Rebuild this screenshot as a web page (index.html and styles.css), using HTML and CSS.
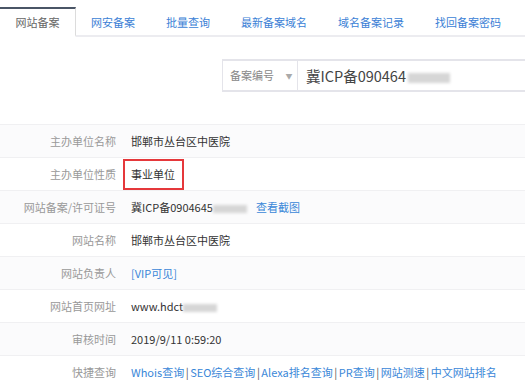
FILE: index.html
```html
<!DOCTYPE html>
<html lang="zh-CN">
<head>
    <meta charset="UTF-8">
    <meta name="viewport" content="width=device-width, initial-scale=1.0">
    <title>网站备案查询</title>
    <link rel="stylesheet" href="styles.css">
</head>
<body>

    <!-- tabs -->
    <ul class="tabs">
        <li class="tab active">网站备案</li>
        <li class="tab">网安备案</li>
        <li class="tab">批量查询</li>
        <li class="tab">最新备案域名</li>
        <li class="tab">域名备案记录</li>
        <li class="tab">找回备案密码</li>
    </ul>

    <!-- search box -->
    <div class="search">
        <div class="search-box">
            <div class="search-type">备案编号 <span class="arrow">▼</span></div>
            <div class="search-input">冀ICP备090464<span class="blur blur-wide"></span></div>
        </div>
    </div>

    <!-- result table -->
    <div class="info">
        <div class="row">
            <div class="label">主办单位名称</div>
            <div class="value">邯郸市丛台区中医院</div>
        </div>
        <div class="row">
            <div class="label">主办单位性质</div>
            <div class="value"><span class="mark">事业单位</span></div>
        </div>
        <div class="row">
            <div class="label">网站备案/许可证号</div>
            <div class="value">冀ICP备0904645<span class="blur"></span><a class="link shot" href="#">查看截图</a></div>
        </div>
        <div class="row">
            <div class="label">网站名称</div>
            <div class="value">邯郸市丛台区中医院</div>
        </div>
        <div class="row">
            <div class="label">网站负责人</div>
            <div class="value"><a class="link" href="#">[VIP可见]</a></div>
        </div>
        <div class="row">
            <div class="label">网站首页网址</div>
            <div class="value">www.hdct<span class="blur"></span></div>
        </div>
        <div class="row">
            <div class="label">审核时间</div>
            <div class="value">2019/9/11 0:59:20</div>
        </div>
        <div class="row">
            <div class="label">快捷查询</div>
            <div class="value">
                <a class="link" href="#">Whois查询</a><span class="sep">|</span><a class="link" href="#">SEO综合查询</a><span class="sep">|</span><a class="link" href="#">Alexa排名查询</a><span class="sep">|</span><a class="link" href="#">PR查询</a><span class="sep">|</span><a class="link" href="#">网站测速</a><span class="sep">|</span><a class="link" href="#">中文网站排名</a>
            </div>
        </div>
    </div>

</body>
</html>
```
FILE: styles.css
```css
/* page */
body {
    margin: 0;
    background-color: #ffffff;
    font-family: "Noto Sans CJK SC", "Microsoft YaHei", sans-serif;
    font-size: 11px;
    color: #333;
    overflow: hidden;
}

a {
    text-decoration: none;
}

/* tabs */
.tabs {
    display: flex;
    margin: 0;
    padding: 7px 0 0 0;
    list-style: none;
    border-bottom: 2px solid #ececf0;
}

.tab {
    height: 26px;
    line-height: 26px;
    padding: 0 15.5px;
    color: #3b7fd6;
    margin-bottom: -2px;
    border-top: 2px solid transparent;
    border-bottom: 2px solid transparent;
}

.tab.active {
    color: #666;
    background-color: #fff;
    border-top: 2px solid #4a5566;
    border-right: 1px solid #dcdcdc;
    border-bottom: 2px solid #fff;
    padding-right: 15px;
}

/* search */
.search {
    padding: 22px 0 32px 222px;
}

.search-box {
    display: flex;
    width: 303px;
    height: 33px;
    border: 1px solid #e4e4ea;
    border-width: 2px 0 2px 1px;
    box-sizing: border-box;
}

.search-type {
    width: 75px;
    padding-left: 7px;
    box-sizing: border-box;
    border-right: 1px solid #e4e4ea;
    line-height: 29px;
    color: #888;
}

.arrow {
    font-size: 7px;
    color: #aaa;
    margin-left: 9px;
    vertical-align: 1px;
}

.search-input {
    padding-left: 8px;
    line-height: 29px;
    font-size: 14.5px;
    color: #444;
}

/* blurred parts */
.blur {
    display: inline-block;
    width: 34px;
    height: 8px;
    background-color: #d6d6d6;
    filter: blur(1.5px);
    vertical-align: middle;
}

.blur-wide {
    width: 42px;
    height: 10px;
    margin-left: 2px;
}

/* info rows */
.info {
    border-top: 1px solid #f0f0f2;
}

.row {
    display: grid;
    grid-template-columns: 116px 1fr;
    column-gap: 15px;
    height: 32px;
    align-items: center;
    border-bottom: 1px solid #f0f0f2;
}

.row:nth-child(odd) {
    background-color: #fbfbfc;
}

.label {
    text-align: right;
    color: #999;
}

.value {
    color: #333;
    white-space: nowrap;
}

.link {
    color: #3a87d8;
}

.shot {
    margin-left: 9px;
}

.sep {
    color: #555;
    margin: 0 1.5px;
}

.mark {
    display: inline-block;
    margin-left: -8px;
    padding: 0 7px 0 6px;
    height: 27px;
    line-height: 27px;
    border: 2px solid #e5383b;
}
```
